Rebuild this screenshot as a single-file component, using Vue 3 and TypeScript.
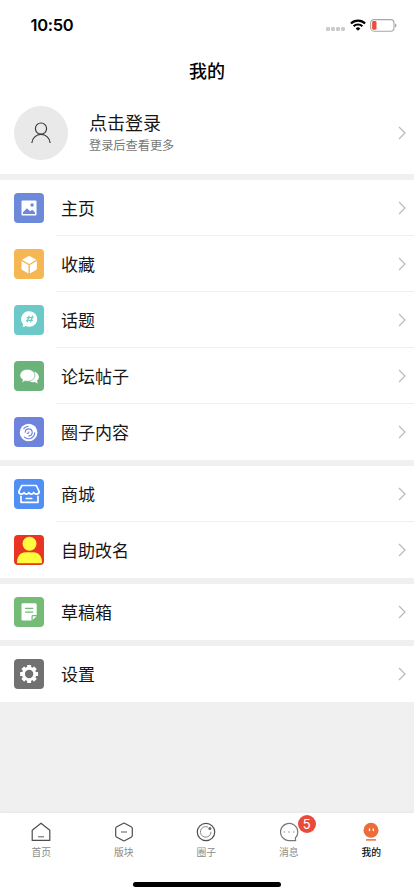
<script setup lang="ts">
interface Entry {
  id: string
  label: string
  color: string
}

interface Tab {
  id: string
  label: string
  badge?: number
  active?: boolean
}

const groups: Entry[][] = [
  [
    { id: 'home', label: '主页', color: '#6c8ad9' },
    { id: 'favorite', label: '收藏', color: '#f5b654' },
    { id: 'topic', label: '话题', color: '#6bcac7' },
    { id: 'forum', label: '论坛帖子', color: '#6bb27b' },
    { id: 'circle', label: '圈子内容', color: '#6e84dc' },
  ],
  [
    { id: 'shop', label: '商城', color: '#528ff5' },
    { id: 'rename', label: '自助改名', color: '#e93323' },
  ],
  [{ id: 'draft', label: '草稿箱', color: '#74bb75' }],
  [{ id: 'settings', label: '设置', color: '#717171' }],
]

const tabs: Tab[] = [
  { id: 'index', label: '首页' },
  { id: 'board', label: '版块' },
  { id: 'group', label: '圈子' },
  { id: 'message', label: '消息', badge: 5 },
  { id: 'mine', label: '我的', active: true },
]

const gearTeeth = [0, 45, 90, 135, 180, 225, 270, 315]
</script>

<template>
  <div class="screen">
    <header class="status">
      <span class="time">10:50</span>
      <div class="indicators">
        <svg class="signal" width="20" height="4" viewBox="0 0 20 4" fill="#cbcbcb">
          <rect x="0" width="4" height="4" rx="1.2" />
          <rect x="5" width="4" height="4" rx="1.2" />
          <rect x="10" width="4" height="4" rx="1.2" />
          <rect x="15" width="4" height="4" rx="1.2" />
        </svg>
        <svg class="wifi" width="16" height="12" viewBox="0 0 16 12">
          <g fill="none" stroke="#000" stroke-width="2.1">
            <path d="M.9 4.5a10.2 10.2 0 0 1 14.2 0" />
            <path d="M3.6 7.3a6.3 6.3 0 0 1 8.8 0" />
          </g>
          <path d="M8 11.8 5.7 9.4a3.3 3.3 0 0 1 4.6 0z" />
        </svg>
        <svg class="battery" width="27" height="13" viewBox="0 0 27 13">
          <rect x=".6" y=".6" width="23.4" height="11.6" rx="3.4" fill="none" stroke="#a6a6a6" stroke-width="1.1" />
          <rect x="2.1" y="2.1" width="4.4" height="8.6" rx="1.4" fill="#eb4d3d" />
          <path d="M25.1 4.4c1.8.7 1.8 3.3 0 4z" fill="#9b9b9b" />
        </svg>
      </div>
    </header>
    <h1 class="title">我的</h1>

    <section class="profile">
      <div class="avatar">
        <svg width="20" height="22" viewBox="0 0 20 22" fill="none" stroke="#3a3a3a" stroke-width="1.2">
          <circle cx="10" cy="6.6" r="5.6" />
          <path d="M.8 21c.5-5 4.2-8.6 9.2-8.6s8.700 3.600 9.200 8.600" />
        </svg>
      </div>
      <div class="who">
        <div class="name">点击登录</div>
        <div class="hint">登录后查看更多</div>
      </div>
      <svg class="chevron" width="8" height="14" viewBox="0 0 8 14"><path d="M1 1l6 6-6 6" /></svg>
    </section>

    <main class="menu">
      <section v-for="(group, index) in groups" :key="index" class="group">
        <div v-for="entry in group" :key="entry.id" class="row">
          <span class="tile" :style="{ backgroundColor: entry.color }">
            <svg width="30" height="30" viewBox="0 0 30 30">
              <template v-if="entry.id === 'home'">
                <rect x="7.500" y="7.500" width="15" height="15" rx="1" fill="#fff" />
                <circle cx="18.100" cy="12" r="1.700" :fill="entry.color" />
                <path d="M9 21v-1.800l3.900-4 3.200 3.100 2.200-1.600 2.700 2.700V21z" :fill="entry.color" />
              </template>
              <template v-else-if="entry.id === 'favorite'">
                <path d="M15.200 6.800l7.200 3.900-7.200 4.200L8 10.700z" fill="#fff" />
                <path d="M7.500 12l7 4v8.500l-6.200-3.600q-.8-.5-.8-1.400zM22.900 12l-7 4v8.500l6.200-3.600q.8-.5.800-1.400z" fill="#fff" />
              </template>
              <template v-else-if="entry.id === 'topic'">
                <path d="M15.600 6.200a7.800 7.800 0 1 1-3.500 14.800q-1.500.8-3.700.6.900-1.100.7-2.500A7.800 7.800 0 0 1 15.600 6.200z" fill="#fff" />
                <path d="M15.200 10.600l-2 6.800M18.600 10.600l-2 6.800M12.600 12.700h6.900M12 15.400h6.900" fill="none" :stroke="entry.color" stroke-width="1.250" />
              </template>
              <template v-else-if="entry.id === 'forum'">
                <path d="M18.500 10.400c3.700.3 6.400 2.500 6.400 5.500 0 1.500-.7 2.800-1.900 3.700l.8 2.900-3.200-1.500c-2.400.5-4.700-.1-6.300-1.300z" fill="#fff" />
                <path d="M13.400 8.300c4.200 0 7.500 2.700 7.500 6s-3.300 6-7.500 6c-.8 0-1.600-.1-2.300-.3l-3.300 1.700.7-3.200c-1.600-1.100-2.600-2.500-2.600-4.200 0-3.300 3.300-6 7.500-6z" fill="#fff" :stroke="entry.color" stroke-width=".7" />
              </template>
              <template v-else-if="entry.id === 'circle'">
                <circle cx="14.600" cy="15.500" r="8.800" fill="#fff" />
                <g fill="none" :stroke="entry.color" stroke-width="1.150" stroke-linecap="round">
                  <path d="M9.800 11.600a6.200 6.200 0 0 1 4.300-2.300M20.700 15.700a6.200 6.200 0 0 1-10.300 4.400" />
                  <path d="M11.200 15.200a3.500 3.500 0 1 1 3.700 3.700M13.100 16.300q1.900.4 1.800-1.400" />
                </g>
              </template>
              <template v-else-if="entry.id === 'shop'">
                <g fill="none" stroke="#fff" stroke-width="1.700" stroke-linejoin="round" stroke-linecap="round">
                  <path d="M7.800 6.500h14.500l2.900 6.100q-.2 2.500-2.700 2.500-1.900 0-2.800-1.500-.9 1.500-2.500 1.500-1.500 0-2.300-1.500-.9 1.500-2.500 1.500-1.500 0-2.300-1.500-.9 1.500-2.600 1.500-2.500 0-2.700-2.500z" />
                  <path d="M7 17.300v6h17v-6M12.200 19.500h5.500" />
                </g>
              </template>
              <template v-else-if="entry.id === 'rename'">
                <g fill="#fffb3d">
                  <circle cx="15.500" cy="8.700" r="7" />
                  <path d="M3 27.500c0-6.200 3.600-10.200 8.500-10.200h8c4.900 0 8.500 4 8.500 10.200q0 .8-.8.8H3.800q-.8 0-.8-.8z" />
                </g>
              </template>
              <template v-else-if="entry.id === 'draft'">
                <path d="M8.500 6.300h12.800q1.400 0 1.400 1.400v10.200h-3.900q-1.300 0-1.300 1.300v4.200h-9q-1 0-1-1V7.300q0-1 1-1z" fill="#fff" />
                <path d="M18.700 23v-3.800h3.800z" fill="#fff" />
                <path d="M11 11.400h8.200M11 15.200h8.200" :stroke="entry.color" stroke-width="1.200" />
              </template>
              <template v-else>
                <rect
                  v-for="angle in gearTeeth"
                  :key="angle"
                  x="13.100"
                  y="6"
                  width="4"
                  height="4"
                  rx=".6"
                  fill="#fff"
                  :transform="`rotate(${angle} 15.100 15)`"
                />
                <circle cx="15.100" cy="15" r="5.700" fill="none" stroke="#fff" stroke-width="3" />
              </template>
            </svg>
          </span>
          <div class="cell">
            <span class="label">{{ entry.label }}</span>
            <svg class="chevron" width="8" height="14" viewBox="0 0 8 14"><path d="M1 1l6 6-6 6" /></svg>
          </div>
        </div>
      </section>
    </main>

    <nav class="tabbar">
      <div v-for="tab in tabs" :key="tab.id" class="tab" :class="{ active: tab.active }">
        <div class="tabicon">
          <svg width="20" height="20" viewBox="0 0 20 20" fill="none" stroke="#4d4d4d" stroke-width="1.200">
            <template v-if="tab.id === 'index'">
              <path d="M1.200 8.200L10 1.200l8.800 7v10.200H1.200z" stroke-linejoin="round" />
              <path d="M7 14.800h6" stroke="#777" />
            </template>
            <template v-else-if="tab.id === 'board'">
              <path d="M9 1.500q1-.6 2 0l6.200 3.300q1.100.6 1.100 1.800v6.800q0 1.200-1.100 1.800L11 18.500q-1 .6-2 0l-6.200-3.300q-1.100-.6-1.100-1.800V6.600q0-1.200 1.100-1.800z" />
              <path d="M7 10h6" stroke="#777" />
            </template>
            <template v-else-if="tab.id === 'group'">
              <circle cx="10" cy="10" r="8.700" />
              <path d="M12 5.100A5.300 5.300 0 1 0 15 9.800" stroke="#888" stroke-width="1" />
              <circle cx="13.900" cy="6.500" r="1.500" fill="#666" stroke="none" />
            </template>
            <template v-else-if="tab.id === 'message'">
              <path d="M16.400 15.900A8.600 8.600 0 1 0 10 18.600h6.100q.9 0 .5-.9-.3-.8-.2-1.800z" stroke="#777" />
              <g fill="#bbb" stroke="none">
                <circle cx="5.300" cy="10" r=".9" />
                <circle cx="10" cy="10" r=".9" />
                <circle cx="14.700" cy="10" r=".9" />
              </g>
            </template>
            <g v-else stroke="none">
              <circle cx="10" cy="8.300" r="7.500" fill="#eb6d3a" />
              <rect x="4.900" y="17.100" width="10.200" height="1.700" rx=".5" fill="#ee8458" />
              <rect x="7.800" y="6.300" width="1.400" height="3" rx=".7" fill="#fff" />
              <rect x="11.600" y="6.300" width="1.400" height="3" rx=".7" fill="#fff" />
            </g>
          </svg>
          <span v-if="tab.badge" class="badge">{{ tab.badge }}</span>
        </div>
        <span class="tablabel">{{ tab.label }}</span>
      </div>
    </nav>
    <div class="homebar"><span class="pill"></span></div>
  </div>
</template>

<style>
body {
  margin: 0;
  background: #f0f0f0;
}
</style>

<style scoped>
.screen {
  display: flex;
  flex-direction: column;
  width: 414px;
  height: 896px;
  overflow: hidden;
  background: #f0f0f0;
  color: #161616;
  font-family: 'Noto Sans CJK SC', sans-serif;
}

.status {
  display: flex;
  flex: none;
  justify-content: space-between;
  align-items: center;
  box-sizing: border-box;
  height: 50px;
  padding: 0 17px 0 30.5px;
  background: #fff;
}

.time {
  color: #000;
  font: 600 16.5px/20px Inter, sans-serif;
  letter-spacing: -0.3px;
}

.indicators {
  display: flex;
  align-items: center;
}

.signal {
  margin: 8px 4px 0 0;
}

.wifi {
  margin-right: 4px;
}

.title {
  flex: none;
  height: 42px;
  margin: 0;
  background: #fff;
  color: #000;
  font-size: 18px;
  font-weight: 500;
  line-height: 40px;
  text-align: center;
}

.profile {
  display: flex;
  flex: none;
  align-items: center;
  height: 82px;
  padding: 0 8px 0 14px;
  margin-bottom: 6px;
  background: #fff;
}

.avatar {
  display: flex;
  align-items: center;
  justify-content: center;
  width: 54px;
  height: 54px;
  border-radius: 50%;
  background: #e9e9e9;
}

.who {
  flex: 1;
  margin-left: 21px;
}

.name {
  font-size: 18px;
  line-height: 24px;
}

.hint {
  color: #777;
  font-size: 12.2px;
  line-height: 22px;
}

.chevron {
  flex: none;
  fill: none;
  stroke: #b8b8b8;
  stroke-width: 1.2;
}

.menu {
  display: flex;
  flex: 1;
  flex-direction: column;
  gap: 6px;
}

.group {
  background: #fff;
}

.row {
  display: flex;
  align-items: center;
  height: 56px;
  padding-left: 14px;
}

.tile {
  width: 30px;
  height: 30px;
  margin-right: 12px;
  overflow: hidden;
  border-radius: 4px;
}

.tile svg {
  display: block;
}

.cell {
  display: flex;
  flex: 1;
  align-items: center;
  justify-content: space-between;
  box-sizing: border-box;
  height: 56px;
  padding: 1px 8px 0 5px;
  border-bottom: 1px solid #efefef;
}

.row:last-child .cell {
  border-bottom-color: transparent;
}

.label {
  font-size: 17px;
  line-height: 24px;
}

.tabbar {
  display: flex;
  flex: none;
  height: 56px;
  padding: 9px 1.5px 0 0;
  box-sizing: border-box;
  background: #fff;
  box-shadow: 0 -1px 3px rgba(0, 0, 0, 0.04);
}

.tab {
  display: flex;
  flex: 1;
  flex-direction: column;
  align-items: center;
  color: #8c8c8c;
}

.tab.active {
  color: #111;
  font-weight: 500;
}

.tabicon {
  position: relative;
  height: 20px;
}

.tabicon svg {
  display: block;
}

.badge {
  position: absolute;
  top: -7px;
  left: 19px;
  width: 18px;
  height: 18px;
  border-radius: 9px;
  background: #e94b3b;
  color: #fff;
  font: 13px/18px Inter, sans-serif;
  text-align: center;
}

.tablabel {
  margin-top: 3px;
  font-size: 9.8px;
  line-height: 14px;
}

.homebar {
  display: flex;
  flex: none;
  justify-content: center;
  height: 27px;
  background: #fff;
}

.pill {
  width: 148px;
  height: 5px;
  margin-top: 13px;
  border-radius: 3px;
  background: #000;
}
</style>
